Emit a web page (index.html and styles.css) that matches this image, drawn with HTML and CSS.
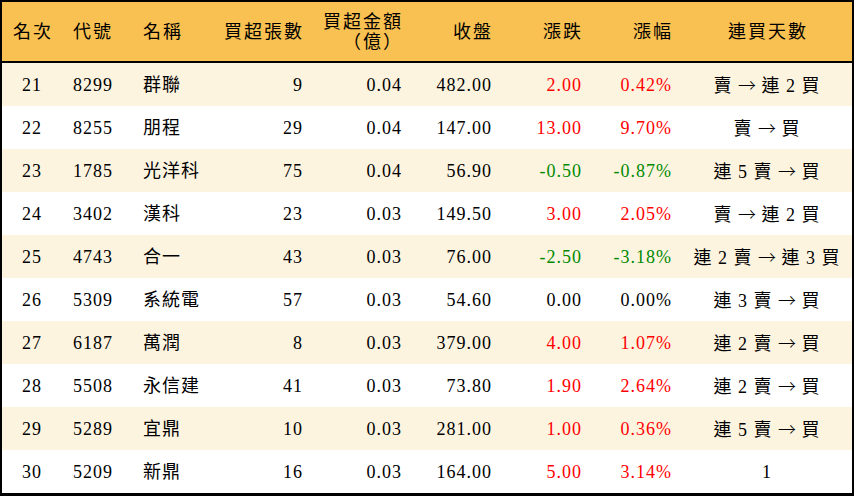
FILE: index.html
```html
<!DOCTYPE html>
<html lang="zh-Hant">
<head>
<meta charset="utf-8">
<title>買超排行</title>
<link rel="stylesheet" href="styles.css">
</head>
<body>
<table class="rank">
  <colgroup>
    <col class="w-rank"><col class="w-code"><col class="w-name"><col class="w-vol">
    <col class="w-amt"><col class="w-close"><col class="w-chg"><col class="w-pct"><col class="w-days">
  </colgroup>
  <thead>
    <tr>
      <th class="c">名次</th>
      <th class="l">代號</th>
      <th class="l">名稱</th>
      <th class="r">買超張數</th>
      <th class="r two">買超金額<br>（億）</th>
      <th class="r">收盤</th>
      <th class="r">漲跌</th>
      <th class="r">漲幅</th>
      <th class="c">連買天數</th>
    </tr>
  </thead>
  <tbody>
    <tr class="odd"><td class="c">21</td><td class="l">8299</td><td class="l">群聯</td><td class="r">9</td><td class="r">0.04</td><td class="r">482.00</td><td class="r up">2.00</td><td class="r up">0.42%</td><td class="c">賣 <span class="arr">→</span> 連 2 買</td></tr>
    <tr><td class="c">22</td><td class="l">8255</td><td class="l">朋程</td><td class="r">29</td><td class="r">0.04</td><td class="r">147.00</td><td class="r up">13.00</td><td class="r up">9.70%</td><td class="c">賣 <span class="arr">→</span> 買</td></tr>
    <tr class="odd"><td class="c">23</td><td class="l">1785</td><td class="l">光洋科</td><td class="r">75</td><td class="r">0.04</td><td class="r">56.90</td><td class="r down">-0.50</td><td class="r down">-0.87%</td><td class="c">連 5 賣 <span class="arr">→</span> 買</td></tr>
    <tr><td class="c">24</td><td class="l">3402</td><td class="l">漢科</td><td class="r">23</td><td class="r">0.03</td><td class="r">149.50</td><td class="r up">3.00</td><td class="r up">2.05%</td><td class="c">賣 <span class="arr">→</span> 連 2 買</td></tr>
    <tr class="odd"><td class="c">25</td><td class="l">4743</td><td class="l">合一</td><td class="r">43</td><td class="r">0.03</td><td class="r">76.00</td><td class="r down">-2.50</td><td class="r down">-3.18%</td><td class="c">連 2 賣 <span class="arr">→</span> 連 3 買</td></tr>
    <tr><td class="c">26</td><td class="l">5309</td><td class="l">系統電</td><td class="r">57</td><td class="r">0.03</td><td class="r">54.60</td><td class="r">0.00</td><td class="r">0.00%</td><td class="c">連 3 賣 <span class="arr">→</span> 買</td></tr>
    <tr class="odd"><td class="c">27</td><td class="l">6187</td><td class="l">萬潤</td><td class="r">8</td><td class="r">0.03</td><td class="r">379.00</td><td class="r up">4.00</td><td class="r up">1.07%</td><td class="c">連 2 賣 <span class="arr">→</span> 買</td></tr>
    <tr><td class="c">28</td><td class="l">5508</td><td class="l">永信建</td><td class="r">41</td><td class="r">0.03</td><td class="r">73.80</td><td class="r up">1.90</td><td class="r up">2.64%</td><td class="c">連 2 賣 <span class="arr">→</span> 買</td></tr>
    <tr class="odd"><td class="c">29</td><td class="l">5289</td><td class="l">宜鼎</td><td class="r">10</td><td class="r">0.03</td><td class="r">281.00</td><td class="r up">1.00</td><td class="r up">0.36%</td><td class="c">連 5 賣 <span class="arr">→</span> 買</td></tr>
    <tr><td class="c">30</td><td class="l">5209</td><td class="l">新鼎</td><td class="r">16</td><td class="r">0.03</td><td class="r">164.00</td><td class="r up">5.00</td><td class="r up">3.14%</td><td class="c">1</td></tr>
  </tbody>
</table>
</body>
</html>
```

FILE: styles.css
```css
html, body {
  margin: 0;
  padding: 0;
  background: #ffffff;
}

.rank {
  width: 854px;
  table-layout: fixed;
  border-collapse: separate;
  border-spacing: 0;
  border: 2px solid #000;
  border-bottom-width: 3px;
  font-family: "Liberation Serif", "Noto Sans CJK TC", serif;
  font-size: 18px;
  color: #000;
  letter-spacing: 1px;
}

.w-rank { width: 60px; }
.w-code { width: 70px; }
.w-name { width: 91px; }
.w-vol { width: 90px; }
.w-amt { width: 99px; }
.w-close { width: 90px; }
.w-chg { width: 90px; }
.w-pct { width: 90px; }
.w-days { width: 170px; }

.rank th {
  height: 59px;
  padding: 0;
  background: #f9c151;
  border-bottom: 2px solid #000;
  font-weight: 400;
  font-size: 18px;
  line-height: 20px;
  letter-spacing: 2px;
  vertical-align: middle;
  white-space: nowrap;
}

.rank td {
  height: 43px;
  padding: 0;
  vertical-align: middle;
  white-space: nowrap;
  line-height: 20px;
}

.rank tr.odd td {
  background: #fdf4e0;
}

.c { text-align: center; }
.l { text-align: left; padding-left: 11px !important; }
.rank td.r { text-align: right; padding-right: 10px; }
.rank th.r { text-align: right; padding-right: 9px; }

.rank th.c { padding-left: 2px; }

.arr {
  font-family: "Noto Sans CJK TC", sans-serif;
  font-weight: 300;
  letter-spacing: 0;
}

.up { color: #ff0000; }
.down { color: #008a00; }
```
